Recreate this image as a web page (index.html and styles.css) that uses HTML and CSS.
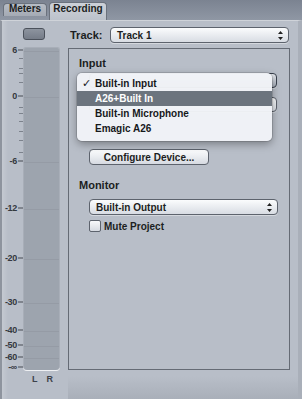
FILE: index.html
```html
<!DOCTYPE html>
<html lang="en">
<head>
    <meta charset="UTF-8">
    <meta name="viewport" content="width=device-width, initial-scale=1.0">
    <title>Recording</title>
    <link rel="stylesheet" href="styles.css">
</head>
<body>
    <div class="window">
        <div class="tabs">
            <div class="tab">Meters</div>
            <div class="tab active">Recording</div>
        </div>
        <div class="panel">
            <div class="meters">
                <div class="meter-button"></div>
                <div class="meter-body">
                    <div class="scale">
                        <span class="mark" style="top: 3px">6</span>
                        <span class="minor" style="top: 11px"></span>
                        <span class="minor" style="top: 21px"></span>
                        <span class="minor" style="top: 26px"></span>
                        <span class="minor" style="top: 35px"></span>
                        <span class="mark" style="top: 49px">0</span>
                        <span class="minor" style="top: 60px"></span>
                        <span class="minor" style="top: 66px"></span>
                        <span class="minor" style="top: 74px"></span>
                        <span class="minor" style="top: 84px"></span>
                        <span class="minor" style="top: 93px"></span>
                        <span class="minor" style="top: 105px"></span>
                        <span class="mark" style="top: 114px">-6</span>
                        <span class="mark" style="top: 161px">-12</span>
                        <span class="mark" style="top: 211px">-20</span>
                        <span class="mark" style="top: 255px">-30</span>
                        <span class="mark" style="top: 283px">-40</span>
                        <span class="mark" style="top: 298px">-50</span>
                        <span class="mark" style="top: 310px">-60</span>
                        <span class="mark" style="top: 320px">-&#8734;</span>
                    </div>
                    <div class="bar">
                        <span class="level" style="top: 3px"></span>
                        <span class="level" style="top: 49px"></span>
                        <span class="level" style="top: 114px"></span>
                        <span class="level" style="top: 161px"></span>
                        <span class="level" style="top: 211px"></span>
                        <span class="level" style="top: 255px"></span>
                        <span class="level" style="top: 283px"></span>
                        <span class="level" style="top: 298px"></span>
                        <span class="level" style="top: 310px"></span>
                    </div>
                </div>
                <div class="channels"><span>L</span><span>R</span></div>
            </div>

            <div class="settings">
                <div class="track-row">
                    <span class="track-label">Track:</span>
                    <div class="popup track-popup">
                        <span>Track 1</span>
                        <svg class="arrows" width="5" height="9" viewBox="0 0 5 9"><path d="M2.5 0L5 3H0z M2.5 9L5 6H0z" fill="#222"/></svg>
                    </div>
                </div>

                <div class="group">
                    <div class="heading">Input</div>
                    <div class="popup device focused"></div>
                    <div class="popup device"></div>
                    <button class="push">Configure Device...</button>

                    <div class="heading monitor">Monitor</div>
                    <div class="popup output">
                        <span>Built-in Output</span>
                        <svg class="arrows" width="5" height="9" viewBox="0 0 5 9"><path d="M2.5 0L5 3H0z M2.5 9L5 6H0z" fill="#222"/></svg>
                    </div>
                    <label class="check"><span class="checkbox"></span>Mute Project</label>

                    <div class="menu">
                        <div class="menu-item"><span class="tick">&#10003;</span>Built-in Input</div>
                        <div class="menu-item selected"><span class="tick"></span>A26+Built In</div>
                        <div class="menu-item"><span class="tick"></span>Built-in Microphone</div>
                        <div class="menu-item"><span class="tick"></span>Emagic A26</div>
                    </div>
                </div>
            </div>
        </div>
    </div>
</body>
</html>
```

FILE: styles.css
```css
body {
    margin: 0;
    font-family: "Liberation Sans", Arial, sans-serif;
    font-weight: bold;
    color: #1c1e22;
    background-color: #b8bec8;
}

.window {
    width: 302px;
    height: 399px;
    display: flex;
    flex-direction: column;
    overflow: hidden;
}

/* tab strip */
.tabs {
    height: 20px;
    display: flex;
    gap: 2px;
    padding-left: 3px;
    box-sizing: border-box;
    background: linear-gradient(#7b8391, #8f97a4);
}

.tab {
    width: 44px;
    height: 13px;
    margin-top: 3px;
    box-sizing: border-box;
    text-align: center;
    font-size: 10px;
    line-height: 10px;
    border: 1px solid #6b727d;
    border-bottom: none;
    border-radius: 4px 4px 0 0;
    background: linear-gradient(#b6bcc5, #a4aab4);
}

.tab.active {
    width: 58px;
    height: 18px;
    margin-top: 2px;
    line-height: 11px;
    background: linear-gradient(#cdd1d8, #bcc2cb);
}

/* main panel */
.panel {
    flex: 1;
    display: flex;
    border-top: 1px solid #cfd3d9;
    border-left: 2px solid #8e949e;
    border-right: 4px solid #a9afb9;
    background: linear-gradient(#b8bec8 94%, #a9afb9);
}

.meters {
    width: 66px;
    display: flex;
    flex-direction: column;
    background: linear-gradient(90deg, #c4c9d1, #b8bec8 6px);
}

.meter-button {
    width: 22px;
    height: 12px;
    margin: 7px 0 0 21px;
    box-sizing: border-box;
    border: 1px solid #4b515b;
    border-radius: 3px;
    background: linear-gradient(#8d949f, #757c88);
}

.meter-body {
    display: flex;
    height: 323px;
    margin-top: 7px;
}

.scale {
    position: relative;
    width: 21px;
}

.mark {
    position: absolute;
    right: 0;
    transform: translateY(-50%);
    display: flex;
    align-items: center;
    font-size: 9px;
    line-height: 9px;
    letter-spacing: -0.3px;
    color: #353940;
}

.mark::after {
    content: "";
    width: 5px;
    height: 1px;
    margin-left: 1px;
    background: #464b53;
}

.minor {
    position: absolute;
    right: 0;
    width: 4px;
    height: 1px;
    background: #7c828c;
}

.bar {
    position: relative;
    width: 37px;
    box-sizing: border-box;
    border: 1px solid #a8aeb8;
    border-bottom: none;
    border-radius: 3px 3px 4px 4px;
    background: #9da4ae;
    box-shadow: 0 1px 0 #eef0f3;
}

.level {
    position: absolute;
    left: 0;
    right: 0;
    height: 1px;
    background: rgba(0, 0, 0, 0.05);
}

.channels {
    display: flex;
    gap: 9px;
    margin: 4px 0 0 30px;
    font-size: 9px;
    color: #3d424a;
}

/* settings column */
.settings {
    width: 222px;
    display: flex;
    flex-direction: column;
}

.track-row {
    display: flex;
    align-items: center;
    margin-top: 6px;
    height: 16px;
}

.track-label {
    width: 40px;
    padding-left: 2px;
    font-size: 11px;
}

.popup {
    position: relative;
    display: flex;
    align-items: center;
    box-sizing: border-box;
    height: 16px;
    padding-left: 6px;
    font-size: 10px;
    border: 1px solid #5d636d;
    border-radius: 4px;
    background: linear-gradient(#fbfcfd, #e9ecf0 50%, #d8dce3);
    box-shadow: 0 1px 0 rgba(255, 255, 255, 0.4);
}

.track-popup {
    width: 179px;
}

.arrows {
    margin-left: auto;
    margin-right: 5px;
}

.group {
    position: relative;
    height: 322px;
    margin-top: 5px;
    padding: 7px 0 0 10px;
    box-sizing: border-box;
    border: 1px solid #656b75;
}

.heading {
    font-size: 11px;
    line-height: 14px;
}

.device {
    width: 188px;
    height: 15px;
    margin: 3px 0 0 10px;
}

.device + .device {
    margin-top: 9px;
}

.device.focused {
    border-color: #39404c;
    background: linear-gradient(#e6e9ee, #a6adb9);
}

.push {
    display: block;
    width: 120px;
    height: 16px;
    margin: 37px 0 0 10px;
    padding: 0;
    font-family: inherit;
    font-weight: bold;
    font-size: 10px;
    color: #1c1e22;
    border: 1px solid #5d636d;
    border-radius: 4px;
    background: linear-gradient(#fbfcfd, #e9ecf0 50%, #d6dae1);
}

.monitor {
    margin-top: 13px;
}

.output {
    width: 189px;
    margin: 7px 0 0 10px;
}

.check {
    display: flex;
    align-items: center;
    gap: 3px;
    margin: 5px 0 0 10px;
    font-size: 10px;
}

.checkbox {
    width: 12px;
    height: 12px;
    box-sizing: border-box;
    border: 1px solid #5d636d;
    border-radius: 2px;
    background: linear-gradient(#f8f9fb, #d6dae1);
}

/* open pop-up menu */
.menu {
    position: absolute;
    top: 24px;
    left: 8px;
    width: 195px;
    padding: 3px 0 5px;
    border-radius: 5px;
    background: rgba(241, 243, 247, 0.97);
    box-shadow: 0 3px 9px rgba(0, 0, 0, 0.35), 0 0 0 1px rgba(0, 0, 0, 0.12);
}

.menu-item {
    display: flex;
    align-items: center;
    height: 15px;
    font-size: 10px;
    color: #16181b;
}

.menu-item .tick {
    width: 13px;
    margin-left: 5px;
    font-family: "DejaVu Sans", sans-serif;
    font-weight: bold;
    font-size: 11px;
}

.menu-item.selected {
    background: #6c747e;
    color: #ffffff;
}
```
